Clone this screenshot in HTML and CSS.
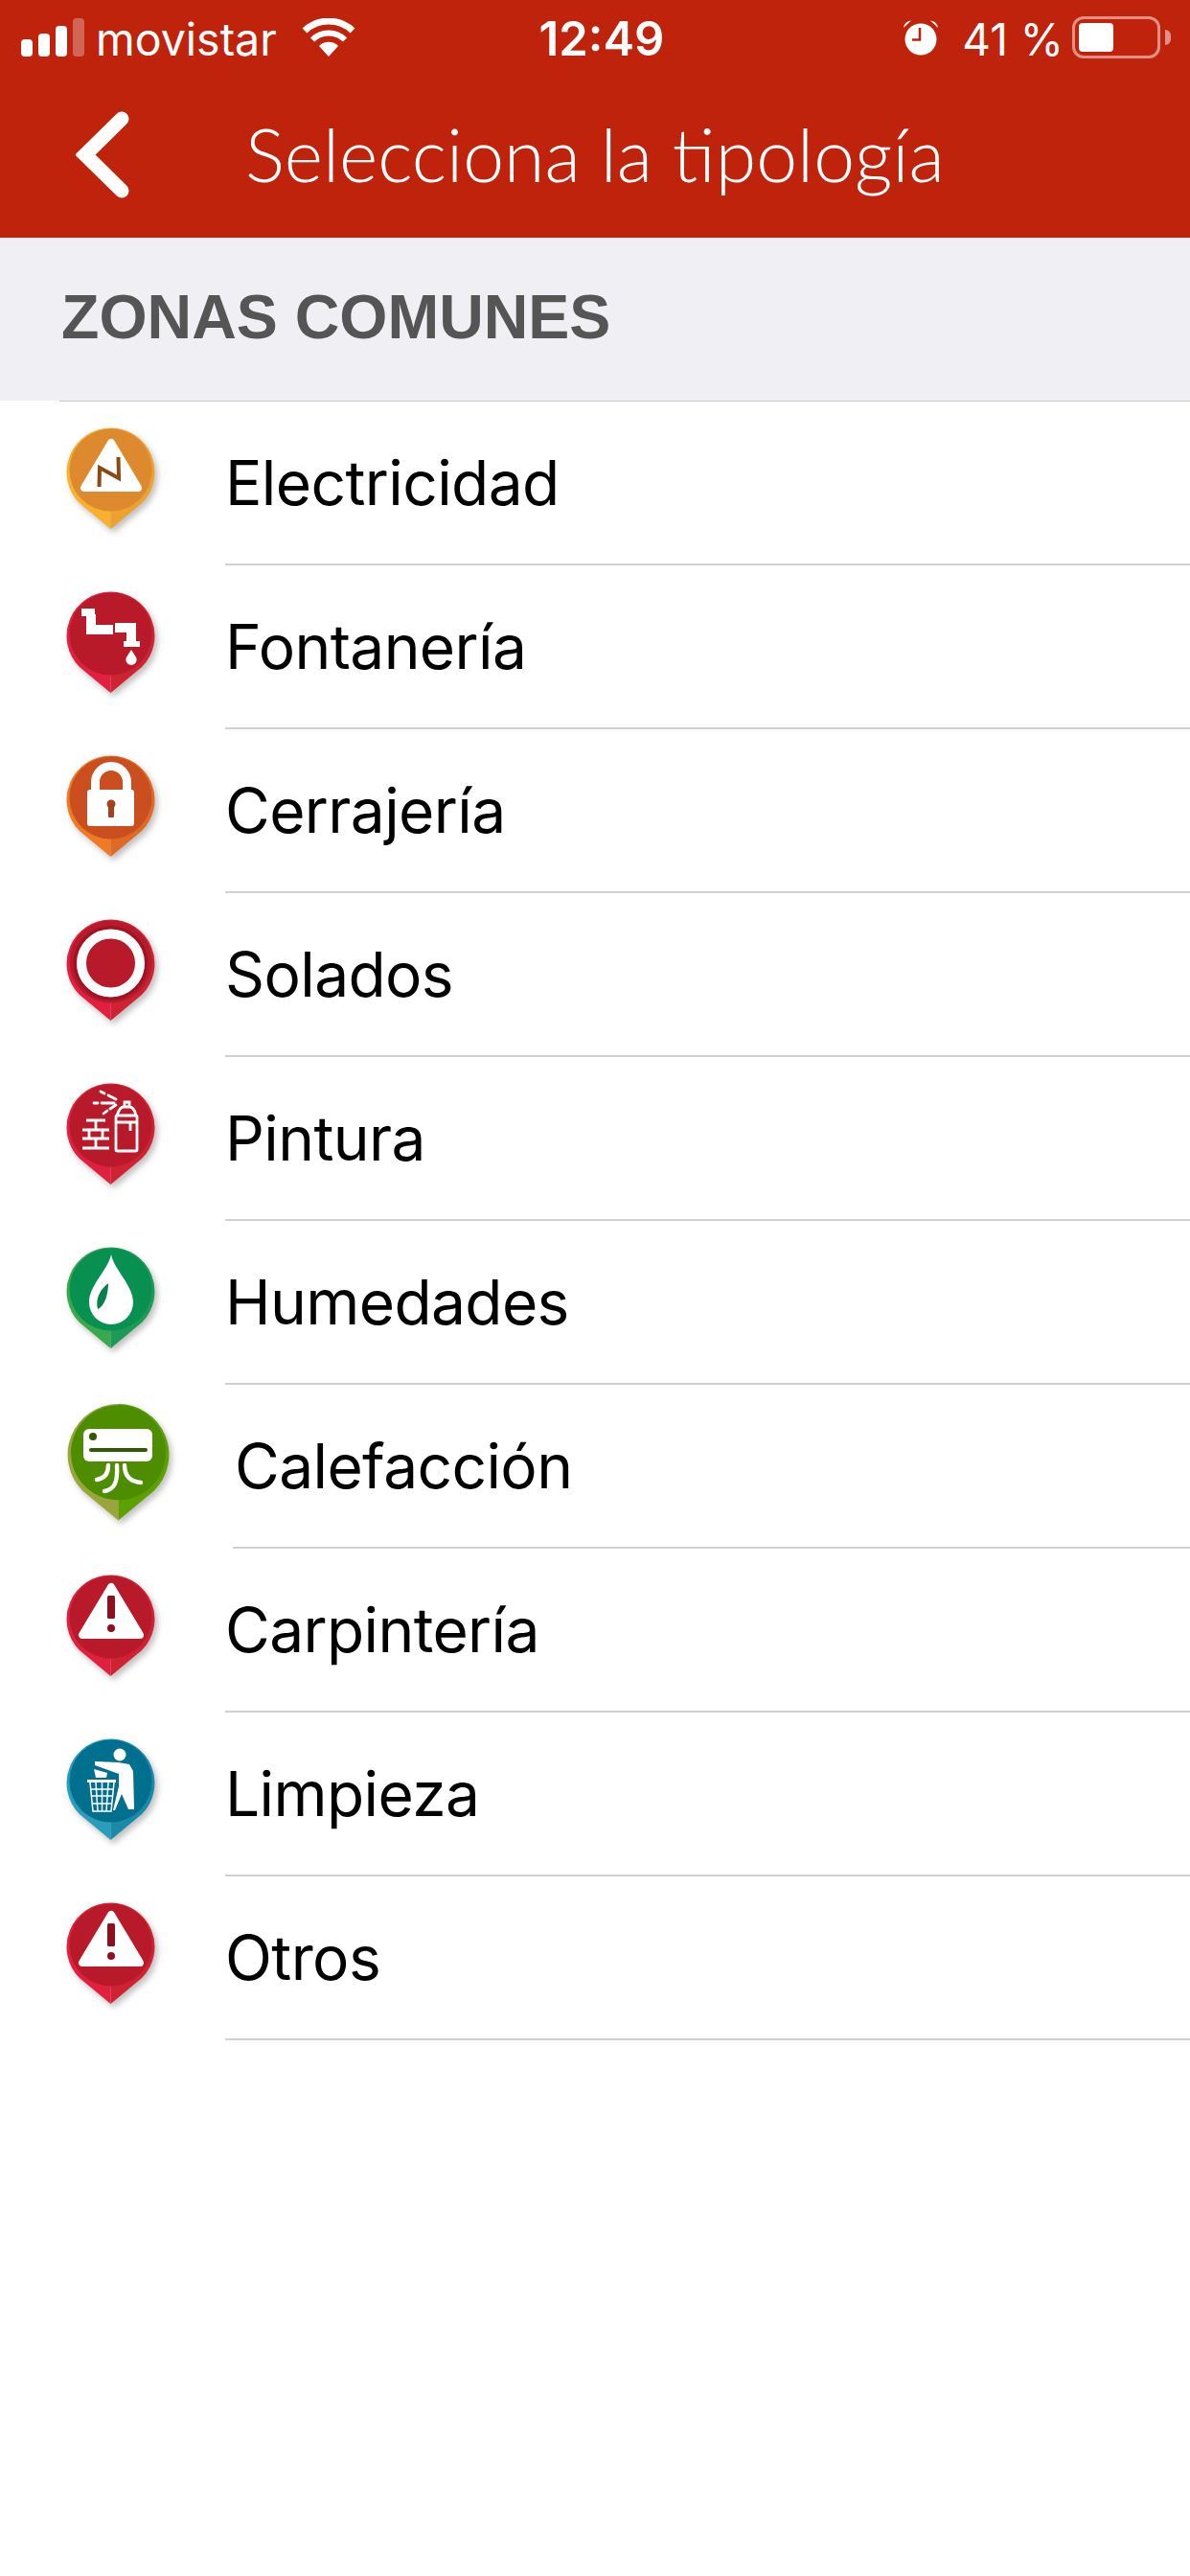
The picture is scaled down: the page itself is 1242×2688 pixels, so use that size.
FILE: index.html
```html
<!DOCTYPE html>
<html lang="es">
<head>
    <meta charset="UTF-8">
    <meta name="viewport" content="width=device-width, initial-scale=1.0">
    <title>Selecciona la tipología</title>
    <link rel="stylesheet" href="styles.css">
</head>
<body>
    <svg class="sprite" xmlns="http://www.w3.org/2000/svg">
        <symbol id="pin" viewBox="0 0 93 106">
            <path class="pin-left" d="M46.5 106 L14 79 A46 46 0 0 1 46.5 0.5 Z"/>
            <path class="pin-right" d="M46.5 106 L79 79 A46 46 0 0 0 46.5 0.5 Z"/>
            <circle class="pin-inner" cx="46.5" cy="44.5" r="43"/>
        </symbol>
        <symbol id="warning" viewBox="0 0 93 106">
            <use href="#pin"/>
            <polygon class="glyph-solid" points="47,13 17,63 77,63"/>
            <rect class="glyph-mark" x="43" y="22" width="8" height="24" rx="1.5"/>
            <circle class="glyph-mark" cx="47" cy="56" r="4"/>
        </symbol>
    </svg>

    <header class="topbar">
        <div class="status">
            <div class="status-left">
                <div class="signal"><i></i><i></i><i></i><i></i></div>
                <span class="carrier">movistar</span>
                <svg class="wifi" width="56" height="40" viewBox="0 0 56 40">
                    <path d="M28 40 L18 29 A14 14 0 0 1 38 29 Z" fill="#fff"/>
                    <path d="M11 22.5 A24 24 0 0 1 45 22.5" fill="none" stroke="#fff" stroke-width="6"/>
                    <path d="M3 13 A36.5 36.5 0 0 1 53 13" fill="none" stroke="#fff" stroke-width="7"/>
                </svg>
            </div>
            <span class="clock">12:49</span>
            <div class="status-right">
                <svg class="alarm" width="38" height="38" viewBox="0 0 38 38">
                    <circle cx="19" cy="21" r="16.5" fill="#fff"/>
                    <path d="M1 9 A9 9 0 0 1 9 1.5 Z M37 9 A9 9 0 0 0 29 1.5 Z" fill="#fff"/>
                    <path d="M18 9 V21.5 H10" fill="none" stroke="#bf230c" stroke-width="2.5"/>
                </svg>
                <span class="percent">41 %</span>
                <div class="battery"><div class="battery-level"></div></div>
                <div class="battery-nub"></div>
            </div>
        </div>
        <nav class="navbar">
            <svg class="back" width="56" height="91" viewBox="0 0 56 91">
                <path d="M48 8 L10 45.5 L48 83" fill="none" stroke="#fff" stroke-width="15" stroke-linecap="round" stroke-linejoin="miter"/>
            </svg>
            <h1 class="title">Selecciona la tipología</h1>
        </nav>
    </header>

    <h2 class="section">ZONAS COMUNES</h2>

    <ul class="list">
        <li class="row">
            <svg class="pin pin-orange" viewBox="0 0 93 106">
                <use href="#pin"/>
                <polygon class="glyph-solid" points="47,16 19,63 75,63"/>
                <path d="M34.5 62 L35 42 L55 53 L54.5 31" fill="none" stroke="#8a4a14" stroke-width="4"/>
            </svg>
            <span class="label">Electricidad</span>
        </li>
        <li class="row">
            <svg class="pin pin-red" viewBox="0 0 93 106">
                <use href="#pin"/>
                <g fill="#fff">
                    <rect x="16" y="18" width="14" height="8"/>
                    <rect x="21" y="24" width="10" height="20"/>
                    <rect x="21" y="35" width="28" height="10"/>
                    <rect x="51" y="33" width="22" height="10"/>
                    <rect x="63" y="33" width="10" height="22"/>
                    <rect x="60" y="52" width="17" height="6"/>
                    <path d="M68 61 L72.5 68 A5.6 5.6 0 1 1 63.5 68 Z"/>
                </g>
            </svg>
            <span class="label">Fontanería</span>
        </li>
        <li class="row">
            <svg class="pin pin-rust" viewBox="0 0 93 106">
                <use href="#pin"/>
                <path d="M30.5 40 V28 A16.5 16.5 0 0 1 63.5 28 V40" fill="none" stroke="#fff" stroke-width="9"/>
                <rect x="22" y="36" width="49" height="38" rx="3" fill="#fff"/>
                <circle cx="47" cy="51" r="4.5" fill="#a8401a"/>
                <rect x="44" y="51" width="6" height="14" rx="1" fill="#a8401a"/>
            </svg>
            <span class="label">Cerrajería</span>
        </li>
        <li class="row">
            <svg class="pin pin-red" viewBox="0 0 93 106">
                <use href="#pin"/>
                <circle cx="46.5" cy="46" r="39" fill="#9e1424"/>
                <circle cx="46.5" cy="46" r="30.5" fill="#b81a2a" stroke="#fff" stroke-width="10"/>
            </svg>
            <span class="label">Solados</span>
        </li>
        <li class="row">
            <svg class="pin pin-red" viewBox="0 0 93 106">
                <use href="#pin"/>
                <g fill="none" stroke="#fff" stroke-width="2.8">
                    <rect x="52" y="34" width="22" height="37" rx="1.5"/>
                    <path d="M53 34 Q56 25 60 25 H66 Q71 25 73 34"/>
                    <path d="M61 25 V20 H66 V25"/>
                    <path d="M53 41 H73 M67 41 V50"/>
                    <path d="M21 39 H41 M31 39 V49 M17 49 H45 M24 49 V58 M38 49 V58 M17 58 H45 M31 58 V68 M17 68 H45"/>
                    <path d="M36 9 L40 11 M44 13 L52 17 M29 21 H33 M37 21 H50 M39 32 L43 29 M46 27 L52 23" stroke-linecap="round"/>
                </g>
            </svg>
            <span class="label">Pintura</span>
        </li>
        <li class="row">
            <svg class="pin pin-green" viewBox="0 0 93 106">
                <use href="#pin"/>
                <path d="M47 8 C50 24 70 40 70 58 A23 23 0 0 1 24 58 C24 40 44 24 47 8 Z" fill="#fff"/>
                <path d="M44 38 C36 44 30 54 33 65 C40 62 44 50 44 38 Z" fill="#07804a"/>
            </svg>
            <span class="label">Humedades</span>
        </li>
        <li class="row row-wide">
            <svg class="pin pin-lime" viewBox="0 0 107 123">
                <use href="#pin" width="107" height="123"/>
                <rect x="17" y="27" width="72" height="34" rx="6" fill="#fff"/>
                <circle cx="27" cy="35" r="4" fill="#2f5a00"/>
                <path d="M25 49 H82" stroke="#2f5a00" stroke-width="4" stroke-linecap="round"/>
                <path d="M43 65 C43 75 38 79 31 80 M52 65 C53 82 50 90 39 92 M60 65 C60 76 66 82 77 83" fill="none" stroke="#fff" stroke-width="4.4" stroke-linecap="round"/>
            </svg>
            <span class="label">Calefacción</span>
        </li>
        <li class="row">
            <svg class="pin pin-red"><use href="#warning"/></svg>
            <span class="label">Carpintería</span>
        </li>
        <li class="row">
            <svg class="pin pin-teal" viewBox="0 0 93 106">
                <use href="#pin"/>
                <g fill="#fff">
                    <circle cx="56" cy="17" r="6.5"/>
                    <polygon points="30,24 54,25 66,27 70,34 71,74 65,74 58,58 51,75 49,75 55,50 55,37 30,28"/>
                    <polygon points="29,32 43,36 42,41 31,41"/>
                    <rect x="22" y="43" width="30" height="3"/>
                </g>
                <path d="M25 46 L28 76 H47 L50 46 M31 46 L33 76 M37.5 46 V76 M44 46 L42 76 M26 53 H49 M26.5 60 H48.5 M27 68 H48" fill="none" stroke="#fff" stroke-width="1.5"/>
            </svg>
            <span class="label">Limpieza</span>
        </li>
        <li class="row">
            <svg class="pin pin-red"><use href="#warning"/></svg>
            <span class="label">Otros</span>
        </li>
    </ul>
</body>
</html>
```

FILE: styles.css
```css
* {
    box-sizing: border-box;
}
body {
    margin: 0;
    background-color: #fff;
    font-family: Inter, "Liberation Sans", sans-serif;
    color: #000;
}
.sprite {
    display: none;
}

/* barra superior */
.topbar {
    height: 248px;
    background-color: #bf230c;
    color: #fff;
}
.status {
    display: grid;
    grid-template-columns: 1fr auto 1fr;
    align-items: center;
    height: 78px;
    padding: 0 20px 0 22px;
}
.status-left,
.status-right {
    display: flex;
    align-items: center;
}
.status-right {
    justify-content: flex-end;
}
.signal {
    display: flex;
    align-items: flex-end;
    gap: 6px;
    height: 40px;
}
.signal i {
    width: 12px;
    border-radius: 4px;
    background-color: #fff;
}
.signal i:nth-child(1) { height: 18px; }
.signal i:nth-child(2) { height: 24px; }
.signal i:nth-child(3) { height: 32px; }
.signal i:nth-child(4) {
    height: 40px;
    opacity: 0.3;
}
.carrier {
    margin-left: 12px;
    padding-top: 3px;
    font-size: 46.5px;
}
.wifi {
    margin-left: 26px;
}
.clock {
    margin-left: 12px;
    padding-top: 3px;
    font-size: 49px;
    font-weight: 600;
}
.alarm {
    margin-right: 24px;
}
.percent {
    padding-top: 3px;
    font-size: 46px;
    margin-right: 9px;
}
.battery {
    width: 92px;
    height: 44px;
    padding: 4px;
    border: 3px solid rgba(255, 255, 255, 0.5);
    border-radius: 12px;
}
.battery-level {
    width: 36px;
    height: 100%;
    border-radius: 4px;
    background-color: #fff;
}
.battery-nub {
    width: 6px;
    height: 16px;
    margin-left: 5px;
    border-radius: 0 6px 6px 0;
    background-color: rgba(255, 255, 255, 0.5);
}
.navbar {
    display: flex;
    align-items: center;
    height: 166px;
    padding-left: 79px;
}
.back {
    margin-right: 121px;
}
.title {
    margin: 0 0 3px;
    font-family: Lato, sans-serif;
    font-size: 77px;
    font-weight: 300;
    white-space: nowrap;
}

/* lista */
.section {
    height: 170px;
    margin: 0;
    padding-left: 64px;
    background-color: #efeff4;
    color: #555;
    font-family: "Liberation Sans", Arial, sans-serif;
    font-size: 64.5px;
    font-weight: 700;
    line-height: 166px;
}
.list {
    margin: 0;
    padding: 0;
    list-style: none;
    border-top: 1px solid #c8c7cc;
    margin-left: 62px;
}
.row {
    display: flex;
    height: 171px;
    margin-left: -62px;
    padding-left: 69px;
}
.pin {
    flex: none;
    width: 93px;
    height: 106px;
    margin: 27px 73px 0 0;
    filter: drop-shadow(3px 4px 3px rgba(0, 0, 0, 0.25));
}
.row-wide {
    padding-left: 70px;
}
.row-wide .pin {
    width: 107px;
    height: 123px;
    margin: 19px 66px 0 0;
}
.label {
    flex: 1;
    border-bottom: 2px solid #d0d0d4;
    font-size: 64px;
    letter-spacing: -0.6px;
    line-height: 170px;
}
.row-wide .label {
    padding-left: 2px;
}

/* colores de los pines */
.pin-left { fill: var(--edge-left); }
.pin-right { fill: var(--edge-right); }
.pin-inner { fill: var(--inner); }
.glyph-solid {
    fill: #fff;
    stroke: #fff;
    stroke-width: 8;
    stroke-linejoin: round;
}
.glyph-mark {
    fill: #8e1020;
}
.pin-orange {
    --edge-left: #f9b02f;
    --edge-right: #eda12e;
    --inner: #dd8a2e;
}
.pin-red {
    --edge-left: #e21f3f;
    --edge-right: #cf2233;
    --inner: #b81a2a;
}
.pin-rust {
    --edge-left: #ee7a22;
    --edge-right: #df6a26;
    --inner: #cb4e1f;
}
.pin-green {
    --edge-left: #3ba84e;
    --edge-right: #1d9a55;
    --inner: #07904f;
}
.pin-lime {
    --edge-left: #9aa63c;
    --edge-right: #5da000;
    --inner: #4e8c00;
}
.pin-teal {
    --edge-left: #2a9dbb;
    --edge-right: #1a8aa8;
    --inner: #016f8e;
}
```
